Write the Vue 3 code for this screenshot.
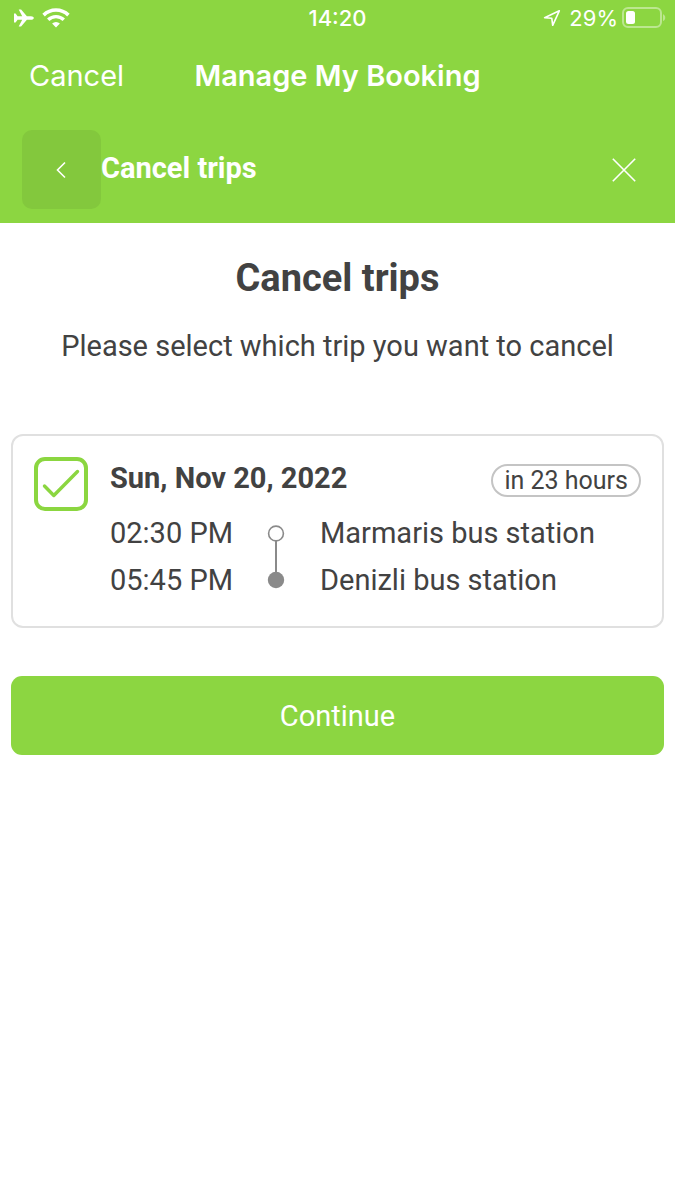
<script setup>
import { ref } from 'vue'

const selected = ref(true)
const stops = [
  { time: '02:30 PM', place: 'Marmaris bus station' },
  { time: '05:45 PM', place: 'Denizli bus station' },
]
</script>

<template>
  <div class="app">
    <header class="top">
      <div class="status">
        <div class="status-left">
          <svg width="20" height="18" viewBox="0 0 20 18" fill="#fff" aria-hidden="true">
            <path d="M0 4.600h1.600L3.600 7.200h4.600L4.700.6h2.400l5.800 6.600H17c1.600 0 2.800.8 2.800 1.800s-1.200 1.800-2.800 1.800h-4.100l-5.800 6.600H4.700l3.500-6.600H3.600l-2 2.600H0z" />
          </svg>
          <svg width="28" height="20" viewBox="0 0 28 20" fill="none" stroke="#fff" aria-hidden="true">
            <path d="M1.600 7.100a17.800 17.800 0 0 1 24.800 0" stroke-width="3.600" />
            <path d="M6.200 11.700a11.300 11.300 0 0 1 15.600 0" stroke-width="3.400" />
            <path d="M14 19.400l-3.900-3.900a5.600 5.600 0 0 1 7.800 0z" fill="#fff" stroke="none" />
          </svg>
        </div>
        <span class="clock">14:20</span>
        <div class="status-right">
          <svg width="18" height="18" viewBox="0 0 18 18" fill="none" stroke="#fff" stroke-width="1.600" stroke-linejoin="round" aria-hidden="true">
            <path d="M16.300 1.800L1.600 8.700l7.200.6.9 7z" />
          </svg>
          <div class="battery">
            <span>29%</span>
            <svg width="44" height="22" viewBox="0 0 44 22" aria-hidden="true">
              <rect x="1" y="1" width="38" height="19" rx="5" fill="none" stroke="#fff" stroke-opacity=".42" stroke-width="2" />
              <rect x="4" y="4" width="9" height="13" rx="2.500" fill="#fff" />
              <path d="M41 7.200c3 1.200 3 5.600 0 6.800z" fill="#fff" fill-opacity=".42" />
            </svg>
          </div>
        </div>
      </div>
      <div class="nav">
        <button type="button" class="cancel">Cancel</button>
        <span class="nav-title">Manage My Booking</span>
      </div>
      <div class="subnav">
        <button type="button" class="back" aria-label="Back">
          <svg width="11" height="18" viewBox="0 0 11 18" fill="none" stroke="#fff" stroke-width="1.600" aria-hidden="true">
            <path d="M9 1.500L1.500 9L9 16.500" />
          </svg>
        </button>
        <span class="sub-title">Cancel trips</span>
        <button type="button" class="close" aria-label="Close">
          <svg width="24" height="24" viewBox="0 0 24 24" fill="none" stroke="#fff" stroke-width="1.600" aria-hidden="true">
            <path d="M.8 .8L23.200 23.200M23.200 .8L.8 23.200" />
          </svg>
        </button>
      </div>
    </header>

    <main class="content">
      <h1>Cancel trips</h1>
      <p class="lead">Please select which trip you want to cancel</p>

      <section class="card">
        <div class="check">
          <input id="trip" v-model="selected" type="checkbox" />
          <svg v-if="selected" class="tick" viewBox="0 0 54 54" fill="none" stroke="#8bd640" stroke-width="3.400" stroke-linecap="round" stroke-linejoin="round" aria-hidden="true">
            <path d="M10.500 29L19.800 38.500L43.500 14.500" />
          </svg>
        </div>
        <div class="trip">
          <div class="trip-head">
            <label for="trip" class="date">Sun, Nov 20, 2022</label>
            <span class="badge">in 23 hours</span>
          </div>
          <div class="route">
            <div class="times">
              <span v-for="s in stops" :key="s.time">{{ s.time }}</span>
            </div>
            <svg width="18" height="64" viewBox="0 0 18 64" aria-hidden="true">
              <path d="M9 16V50" stroke="#8a8a8a" stroke-width="2" />
              <circle cx="9" cy="8.500" r="7.400" fill="#fff" stroke="#8a8a8a" stroke-width="1.600" />
              <circle cx="9" cy="55" r="8.200" fill="#8a8a8a" />
            </svg>
            <div class="places">
              <span v-for="s in stops" :key="s.place">{{ s.place }}</span>
            </div>
          </div>
        </div>
      </section>

      <button type="button" class="continue">Continue</button>
    </main>
  </div>
</template>

<style>
body {
  margin: 0;
  background: #fff;
}
</style>

<style scoped>
.app {
  font-family: Roboto, "Liberation Sans", sans-serif;
  color: #424242;
}
button {
  font: inherit;
  color: #fff;
  border: 0;
  padding: 0;
  background: none;
  cursor: pointer;
}
svg {
  display: block;
  flex: none;
}
.top {
  background: #8cd641;
  color: #fff;
}
.status,
.nav {
  display: grid;
  grid-template-columns: 1fr auto 1fr;
  align-items: center;
  font-family: Inter, "Liberation Sans", sans-serif;
}
.status {
  height: 36px;
  padding: 0 9px;
  font-size: 22px;
}
.status-left,
.status-right {
  display: flex;
  align-items: center;
  gap: 8px;
}
.status-left {
  padding-left: 5px;
}
.status-right {
  justify-content: flex-end;
}
.battery {
  display: flex;
  align-items: center;
  gap: 4px;
}
.clock {
  font-weight: 500;
}
.nav {
  height: 79px;
  padding: 0 29px;
  font-size: 29px;
}
.cancel {
  justify-self: start;
}
.nav-title {
  font-weight: 600;
}
.subnav {
  display: flex;
  align-items: center;
  padding: 15px 39px 14px 22px;
}
.back {
  display: grid;
  place-items: center;
  width: 79px;
  height: 79px;
  border-radius: 10px;
  background: #83c83d;
}
.sub-title {
  flex: 1;
  padding-bottom: 4px;
  font-size: 29px;
  font-weight: 700;
}
.close {
  display: grid;
  place-items: center;
}
.content {
  padding: 32px 11px;
}
h1 {
  margin: 0;
  font-size: 38px;
  line-height: 46px;
  font-weight: 700;
  text-align: center;
}
.lead {
  margin: 25px 0 68px;
  font-size: 29px;
  line-height: 40px;
  text-align: center;
}
.card {
  display: flex;
  gap: 22px;
  padding: 21px 21px 22px;
  border: 2px solid #e0e0e0;
  border-radius: 12px;
}
.check {
  position: relative;
  flex: none;
  width: 54px;
  height: 54px;
}
.check input {
  appearance: none;
  display: block;
  box-sizing: border-box;
  width: 54px;
  height: 54px;
  margin: 0;
  border: 4px solid #8bd640;
  border-radius: 11px;
  background: #fff;
}
.tick {
  position: absolute;
  inset: 0;
  pointer-events: none;
}
.trip {
  flex: 1;
}
.trip-head {
  display: flex;
  align-items: flex-start;
  justify-content: space-between;
  padding-top: 7px;
}
.date {
  font-size: 29px;
  line-height: 29px;
  font-weight: 700;
}
.badge {
  padding: 0 11px;
  border: 2px solid #c4c4c4;
  border-radius: 17px;
  font-size: 25px;
  line-height: 29px;
}
.route {
  display: flex;
  align-items: center;
  margin-top: 13px;
  font-size: 29px;
  line-height: 47px;
}
.times,
.places {
  display: flex;
  flex-direction: column;
}
.times {
  width: 157px;
}
.places {
  margin-left: 35px;
}
.continue {
  display: block;
  width: 100%;
  height: 79px;
  margin-top: 48px;
  border-radius: 11px;
  background: #8cd641;
  font-size: 29px;
}
</style>
